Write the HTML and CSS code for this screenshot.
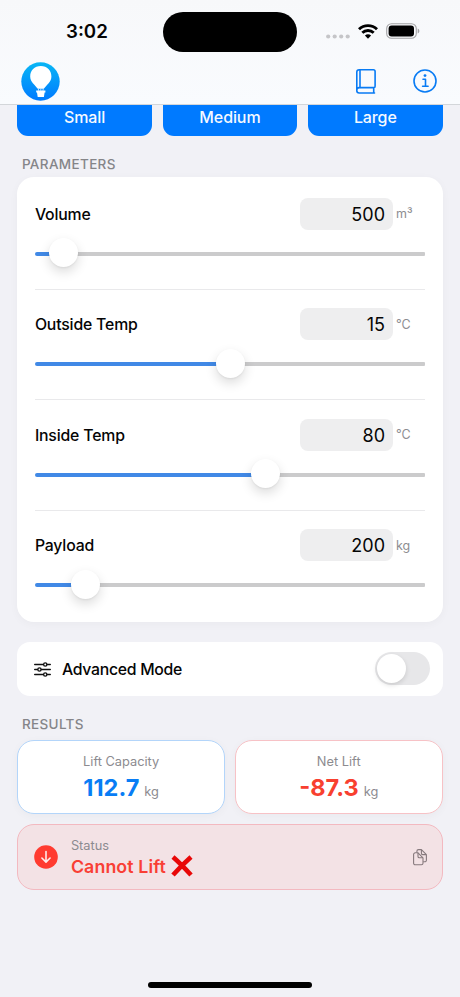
FILE: index.html
```html
<!DOCTYPE html>
<html lang="en">
<head>
<meta charset="utf-8">
<title>Lift Calculator</title>
<link rel="stylesheet" href="styles.css">
</head>
<body>
<div class="screen">
  <header class="header">
    <div class="statusbar">
      <span class="time">3:02</span>
      <span class="island"></span>
      <div class="indicators">
        <svg class="dots" width="24" height="5" viewBox="0 0 24 5" fill="#c5c5c8"><circle cx="2.2" cy="2.5" r="2.1"/><circle cx="8.7" cy="2.5" r="2.1"/><circle cx="15.2" cy="2.5" r="2.1"/><circle cx="21.7" cy="2.5" r="2.1"/></svg>
        <svg class="wifi" width="20" height="15" viewBox="0 0 20 15" fill="none" stroke="#000" stroke-width="2.9"><path d="M1 5.2a13 13 0 0 1 18 0"/><path d="M4.3 8.8a8.3 8.3 0 0 1 11.4 0"/><path d="M10 14.7l-3.1-3.1a4.6 4.6 0 0 1 6.2 0z" fill="#000" stroke="none"/></svg>
        <svg class="battery" width="34" height="16" viewBox="0 0 34 16"><rect x=".7" y=".7" width="29.6" height="14.6" rx="4.8" fill="none" stroke="#a3a3a5" stroke-width="1.1"/><rect x="2.6" y="2.6" width="25.4" height="10.8" rx="3" fill="#000"/><path d="M31.7 5.5c2.2.8 2.2 4.2 0 5z" fill="#a3a3a5"/></svg>
      </div>
    </div>
    <nav class="nav">
      <svg class="logo" width="39" height="39" viewBox="0 0 39 39"><defs><linearGradient id="sky" x1="0" y1="0" x2="0" y2="1"><stop offset="0" stop-color="#08b6f5"/><stop offset="1" stop-color="#007aff"/></linearGradient></defs><circle cx="19.5" cy="19.5" r="19.2" fill="url(#sky)"/><path d="M19.800 4C13.400 4 9.200 8.600 9.200 14.400c0 5.600 4.700 8.200 7.600 12.400h6c2.900-4.200 7.600-6.800 7.600-12.400C30.400 8.600 26.200 4 19.800 4z" fill="#fff"/><path d="M17.300 26.500l.4 2.300M19.800 26.500v2.300M22.300 26.500l-.4 2.300" stroke="#d5eaff" stroke-width=".9"/><path d="M15.200 28.400h9.200v2h-.8l-.7 4.600h-6.200l-.7-4.600h-.8z" fill="#fff"/></svg>
      <div class="actions">
        <svg width="20" height="25" viewBox="0 0 20 25" fill="none" stroke="#087bf4" stroke-width="1.6" stroke-linecap="round" stroke-linejoin="round"><path d="M18.500 24H3.200A2.400 2.400 0 0 1 .8 21.600V3.200A2.400 2.400 0 0 1 3.200.8H17.400A1.700 1.700 0 0 1 19.100 2.500V17.200A1.400 1.400 0 0 1 17.700 18.600H3.200A2.400 2.400 0 0 0 .8 21M17.700 18.700V23.900"/><path d="M4 .9V18.500"/></svg>
        <svg width="24" height="24" viewBox="0 0 24 24" fill="none" stroke="#087bf4" stroke-width="1.6" stroke-linecap="round" stroke-linejoin="round"><circle cx="12" cy="12" r="11"/><path d="M10 10.300h2.500v6.800M9.600 17.200h5.500"/><circle cx="12" cy="6.600" r="1.400" fill="#087bf4" stroke="none"/></svg>
      </div>
    </nav>
  </header>

  <main class="content">
    <div class="presets">
      <button class="preset">Small</button>
      <button class="preset">Medium</button>
      <button class="preset">Large</button>
    </div>

    <h2 class="section params-title">PARAMETERS</h2>
    <section class="card parameters">
      <div class="param">
        <div class="param-head"><span class="label">Volume</span><span class="field">500</span><span class="unit">m³</span></div>
        <div class="slider"><span class="fill" style="width:28.5px"></span><span class="thumb"></span><span class="rest"></span></div>
      </div>
      <div class="param">
        <div class="param-head"><span class="label">Outside Temp</span><span class="field">15</span><span class="unit">°C</span></div>
        <div class="slider"><span class="fill" style="width:195px"></span><span class="thumb"></span><span class="rest"></span></div>
      </div>
      <div class="param">
        <div class="param-head"><span class="label">Inside Temp</span><span class="field">80</span><span class="unit">°C</span></div>
        <div class="slider"><span class="fill" style="width:230px"></span><span class="thumb"></span><span class="rest"></span></div>
      </div>
      <div class="param">
        <div class="param-head"><span class="label">Payload</span><span class="field">200</span><span class="unit">kg</span></div>
        <div class="slider"><span class="fill" style="width:50px"></span><span class="thumb"></span><span class="rest"></span></div>
      </div>
    </section>

    <section class="card advanced">
      <svg width="17" height="15" viewBox="0 0 17 15" fill="none" stroke="#111" stroke-width="1.35" stroke-linecap="round"><path d="M.7 2.500H9.300M13.200 2.500h3.100M.7 7.500h2.800M7.400 7.500h8.900M.7 12.500h8.600M13.200 12.500h3.100"/><circle cx="11.250" cy="2.500" r="1.650"/><circle cx="5.450" cy="7.500" r="1.650"/><circle cx="11.250" cy="12.500" r="1.650"/></svg>
      <span class="label">Advanced Mode</span>
      <span class="toggle"><span class="knob"></span></span>
    </section>

    <h2 class="section results-title">RESULTS</h2>
    <div class="results">
      <div class="card result capacity"><span class="caption">Lift Capacity</span><div class="reading"><strong>112.7</strong><span>kg</span></div></div>
      <div class="card result net"><span class="caption">Net Lift</span><div class="reading"><strong>-87.3</strong><span>kg</span></div></div>
    </div>

    <section class="status">
      <svg width="24" height="24" viewBox="0 0 24 24"><circle cx="12" cy="12" r="11.800" fill="#ff3b30"/><path d="M12 6.500V17M7.900 13l4.100 4.100 4.100-4.100" fill="none" stroke="#ffebe9" stroke-width="1.600" stroke-linecap="round" stroke-linejoin="round"/></svg>
      <div class="status-text">
        <span class="caption">Status</span>
        <div class="verdict"><strong>Cannot Lift</strong><svg width="22" height="22" viewBox="0 0 22 22"><path d="M2 2Q10 9 20 20M20 2Q11 10 2 20" fill="none" stroke="#e80808" stroke-width="4.600"/></svg></div>
      </div>
      <svg class="copy" width="14" height="17" viewBox="0 0 14 17" fill="none" stroke="#86797d" stroke-width="1.100" stroke-linejoin="round"><path d="M2.200 3.800H5l5 5V14.200a1.600 1.600 0 0 1-1.600 1.600H2.200A1.600 1.600 0 0 1 .6 14.200V5.400A1.600 1.600 0 0 1 2.200 3.800z"/><path d="M5 3.800V7.400A1.300 1.300 0 0 0 6.300 8.700H10"/><path d="M3.900 3.600V2.200A1.600 1.600 0 0 1 5.500.6H8.400l5 5V11.200a1.600 1.600 0 0 1-1.600 1.600H10.200M8.400.7V4.300A1.300 1.300 0 0 0 9.700 5.600H13.300"/></svg>
    </section>
  </main>
  <footer class="home"><span></span></footer>
</div>
</body>
</html>
```
FILE: styles.css
```css
* { box-sizing: border-box; }
body { margin: 0; background: #f1f1f6; font-family: Inter, "Liberation Sans", sans-serif; color: #050505; }
.screen { width: 460px; height: 997px; overflow: hidden; display: flex; flex-direction: column; }

.header { height: 105px; flex: none; background: linear-gradient(#f7f8fa, #f9fbfe); border-bottom: 1px solid #d3d6da; }
.statusbar { height: 62px; padding-top: 12px; display: grid; grid-template-columns: 163px 134px 163px; align-items: start; }
.time { padding-left: 66px; line-height: 40px; font-size: 18.7px; font-weight: 600; }
.island { height: 39.500px; border-radius: 20px; background: #000; }
.indicators { display: flex; align-items: center; height: 38px; padding-left: 29px; }
.dots { margin-top: 11px; }
.wifi { margin-left: 8px; }
.battery { margin-left: 8px; }
.nav { height: 38px; padding: 0 23.500px 0 21px; display: flex; align-items: center; justify-content: space-between; }
.actions { display: flex; align-items: center; gap: 36.500px; }

.content { flex: 1; padding: 0 17.500px 0 17.400px; display: flex; flex-direction: column; }
.presets { display: grid; grid-template-columns: repeat(3, 1fr); gap: 11px; }
.preset { height: 31.300px; border: 0; padding: 0 0 7px; border-radius: 0 0 11px 11px; background: #007aff; color: #f5f9ff; font: 500 16px/24px Inter, sans-serif; letter-spacing: -.1px; }

.section { margin: 0; padding-left: 4.500px; font-size: 13.500px; font-weight: 500; line-height: 18px; color: #858589; letter-spacing: .35px; }
.params-title { margin-top: 18.800px; }
.card { background: #fff; box-shadow: 0 2px 10px rgba(0, 0, 0, .035); }

.parameters { height: 445px; margin-top: 3.900px; flex: none; border-radius: 17px; padding: 21px 17.500px 0; }
.param { height: 110.400px; }
.param::after { content: ""; display: block; height: 1px; margin-top: 21.500px; background: #e9e9eb; }
.param:last-child::after { display: none; }
.param-head { height: 32px; display: flex; align-items: center; }
.label { padding-top: 1px; font-size: 15.800px; font-weight: 500; letter-spacing: -.17px; }
.field { width: 93.500px; height: 32px; margin-left: auto; padding-right: 8px; border-radius: 8px; background: #eeeeef; text-align: right; font-size: 18px; line-height: 33px; }
.unit { width: 32px; padding-left: 3px; font-size: 12.500px; color: #8d8d91; }
.slider { height: 29px; margin: 8.500px 0 0; padding: 0 .5px; display: flex; align-items: center; }
.fill, .rest { height: 4px; margin-top: 2px; }
.fill { flex: none; border-radius: 2px 0 0 2px; background: #4189e6; }
.rest { flex: 1; background: #cbcbcc; border-radius: 0 1px 1px 0; }
.thumb { z-index: 1; flex: none; width: 29px; height: 29px; margin: 0 -14.500px; border-radius: 50%; background: #fff; box-shadow: 0 5px 12px rgba(0, 0, 0, .14), 0 1px 2px rgba(0, 0, 0, .06); }

.advanced { height: 54px; flex: none; margin-top: 20px; border-radius: 13px; padding: 0 13px 0 17px; display: flex; align-items: center; box-shadow: none; }
.advanced svg { margin-top: 1px; }
.advanced .label { margin-left: 10.500px; padding-top: 2px; letter-spacing: -.28px; }
.toggle { width: 54.500px; height: 33px; margin-left: auto; padding: 2px; border-radius: 17px; background: #e7e7e9; }
.knob { display: block; width: 29px; height: 29px; border-radius: 50%; background: #fff; box-shadow: 0 2px 5px rgba(0, 0, 0, .13); }

.results-title { margin-top: 19px; }
.results { margin-top: 7.500px; display: grid; grid-template-columns: 1fr 1fr; gap: 10px; }
.result { height: 74px; border: 1px solid; border-radius: 17px; display: flex; flex-direction: column; align-items: center; padding-top: 12px; }
.capacity { border-color: #b3d5fa; }
.net { border-color: #f7c2c6; }
.caption { font-size: 12.800px; line-height: 17px; color: #8c8b90; letter-spacing: 0; }
.reading { display: flex; align-items: baseline; gap: 5px; height: 30px; line-height: 35px; }
.reading strong { font-size: 23.500px; font-weight: 700; }
.reading span { font-size: 12.800px; color: #8c8b90; }
.capacity strong { color: #087df5; }
.net strong { color: #f8402f; }

.status { height: 66px; margin-top: 10px; border: 1px solid #f3b9c0; border-radius: 17px; background: #f3e2e5; display: flex; align-items: center; padding: 0 15px 0 15.500px; }
.status-text { margin: 1px 0 0 13px; }
.status .caption { display: block; }
.verdict { display: flex; align-items: center; gap: 5px; height: 24px; color: #f93f35; }
.verdict strong { font-size: 17.800px; font-weight: 600; letter-spacing: .1px; }
.copy { margin-left: auto; }

.home { height: 15px; flex: none; display: flex; justify-content: center; align-items: flex-start; }
.home span { width: 164.500px; height: 5.500px; border-radius: 3px; background: #000; }
```
